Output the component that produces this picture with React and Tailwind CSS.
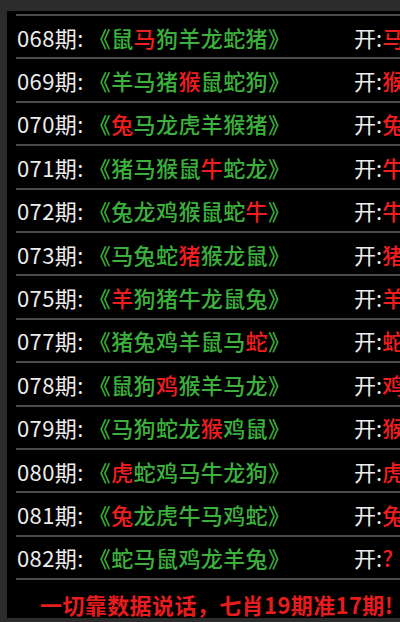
import React from 'react';

const ROWS = [
    { no: '068', zodiac: '鼠马狗羊龙蛇猪', hit: 1, open: '马' },
    { no: '069', zodiac: '羊马猪猴鼠蛇狗', hit: 3, open: '猴' },
    { no: '070', zodiac: '兔马龙虎羊猴猪', hit: 0, open: '兔' },
    { no: '071', zodiac: '猪马猴鼠牛蛇龙', hit: 4, open: '牛' },
    { no: '072', zodiac: '兔龙鸡猴鼠蛇牛', hit: 6, open: '牛' },
    { no: '073', zodiac: '马兔蛇猪猴龙鼠', hit: 3, open: '猪' },
    { no: '075', zodiac: '羊狗猪牛龙鼠兔', hit: 0, open: '羊' },
    { no: '077', zodiac: '猪兔鸡羊鼠马蛇', hit: 6, open: '蛇' },
    { no: '078', zodiac: '鼠狗鸡猴羊马龙', hit: 2, open: '鸡' },
    { no: '079', zodiac: '马狗蛇龙猴鸡鼠', hit: 4, open: '猴' },
    { no: '080', zodiac: '虎蛇鸡马牛龙狗', hit: 0, open: '虎' },
    { no: '081', zodiac: '兔龙虎牛马鸡蛇', hit: 0, open: '兔' },
    { no: '082', zodiac: '蛇马鼠鸡龙羊兔', hit: -1, open: '?' },
];

const font = { fontFamily: '"Noto Sans CJK SC", "Noto Sans", sans-serif' };

const Row = ({ row }) => (
    <div className="h-[43.4px] border-t-2 border-[#4a4a4a] flex items-center whitespace-nowrap text-[22px] leading-none">
        <div className="w-[338px] shrink-0 pl-[1px] flex items-center">
            <span className="text-[#ececec] tracking-[0.4px]">{row.no}期:</span>
            <span className="ml-[5px] text-[#3cb03c] font-medium tracking-[0.4px]">
                《
                {row.zodiac.split('').map((c, i) => (
                    <span key={i} className={i === row.hit ? 'text-[#f01e1e]' : ''}>{c}</span>
                ))}
                》
            </span>
        </div>
        <span className="text-[#ececec]">开:</span>
        <span className="text-[#f01e1e] font-medium">{row.open}</span>
    </div>
);

export default function App() {
    return (
        <div className="w-[400px] h-[622px] bg-[#2c2c2c] overflow-hidden pl-[7px] pt-[11px]" style={font}>
            <div className="h-[607px] bg-black pl-[9px] pt-[3px] overflow-hidden">
                {ROWS.map(r => <Row key={r.no} row={r} />)}
                <div className="border-t-2 border-[#4a4a4a] pt-[13px] pl-[24px] whitespace-nowrap text-[22px] tracking-[0.4px] leading-none font-bold text-[#e81c1c]">
                    一切靠数据说话，七肖19期准17期!
                </div>
            </div>
        </div>
    );
}
